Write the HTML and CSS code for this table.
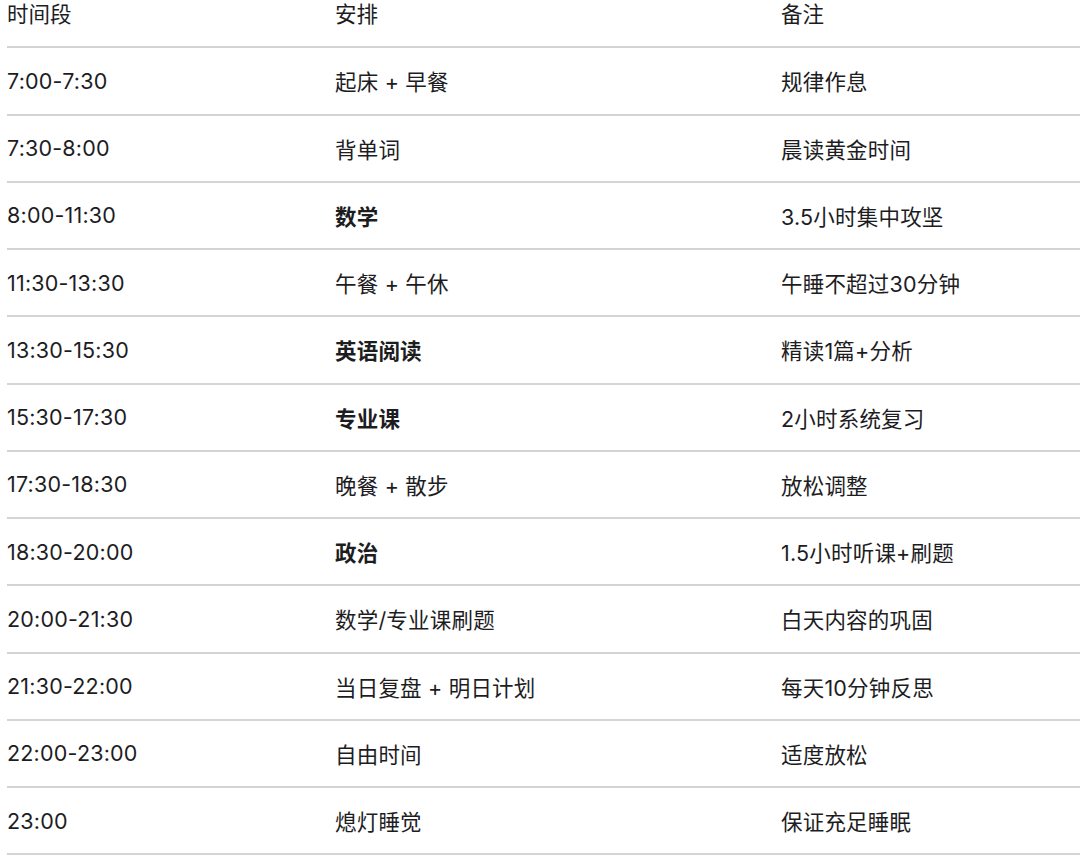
FILE: index.html
```html
<!DOCTYPE html>
<html lang="zh-CN">
<head>
<meta charset="utf-8">
<link rel="stylesheet" href="styles.css">
</head>
<body>
<table class="plan">
  <thead>
    <tr><th class="c1">时间段</th><th class="c2">安排</th><th class="c3">备注</th></tr>
  </thead>
  <tbody>
    <tr><td>7:00-7:30</td><td>起床 + 早餐</td><td>规律作息</td></tr>
    <tr><td>7:30-8:00</td><td>背单词</td><td>晨读黄金时间</td></tr>
    <tr><td>8:00-11:30</td><td class="b">数学</td><td>3.5小时集中攻坚</td></tr>
    <tr><td>11:30-13:30</td><td>午餐 + 午休</td><td>午睡不超过30分钟</td></tr>
    <tr><td>13:30-15:30</td><td class="b">英语阅读</td><td>精读1篇+分析</td></tr>
    <tr><td>15:30-17:30</td><td class="b">专业课</td><td>2小时系统复习</td></tr>
    <tr><td>17:30-18:30</td><td>晚餐 + 散步</td><td>放松调整</td></tr>
    <tr><td>18:30-20:00</td><td class="b">政治</td><td>1.5小时听课+刷题</td></tr>
    <tr><td>20:00-21:30</td><td>数学/专业课刷题</td><td>白天内容的巩固</td></tr>
    <tr><td>21:30-22:00</td><td>当日复盘 + 明日计划</td><td>每天10分钟反思</td></tr>
    <tr><td>22:00-23:00</td><td>自由时间</td><td>适度放松</td></tr>
    <tr><td>23:00</td><td>熄灯睡觉</td><td>保证充足睡眠</td></tr>
  </tbody>
</table>
</body>
</html>
```
FILE: styles.css
```css
html, body {
  margin: 0;
  padding: 0;
  background: #ffffff;
}
body {
  overflow: hidden;
  font-family: Inter, "Noto Sans CJK SC", sans-serif;
  color: #1d1d1f;
}
.plan {
  margin-left: 7px;
  margin-top: -19px;
  width: 1073px;
  border-collapse: collapse;
  table-layout: fixed;
}
.plan th, .plan td {
  height: 65.25px;
  padding: 0;
  text-align: left;
  vertical-align: middle;
  font-size: 21.5px;
  font-weight: 400;
  border-bottom: 2px solid #d4d4d4;
  white-space: nowrap;
}
.plan td { letter-spacing: 0.2px; }
.plan th { height: 63.25px; padding-bottom: 2px; }
.plan .c1 { width: 328px; }
.plan .c2 { width: 446px; }
.plan .b { font-weight: 600; }
```
